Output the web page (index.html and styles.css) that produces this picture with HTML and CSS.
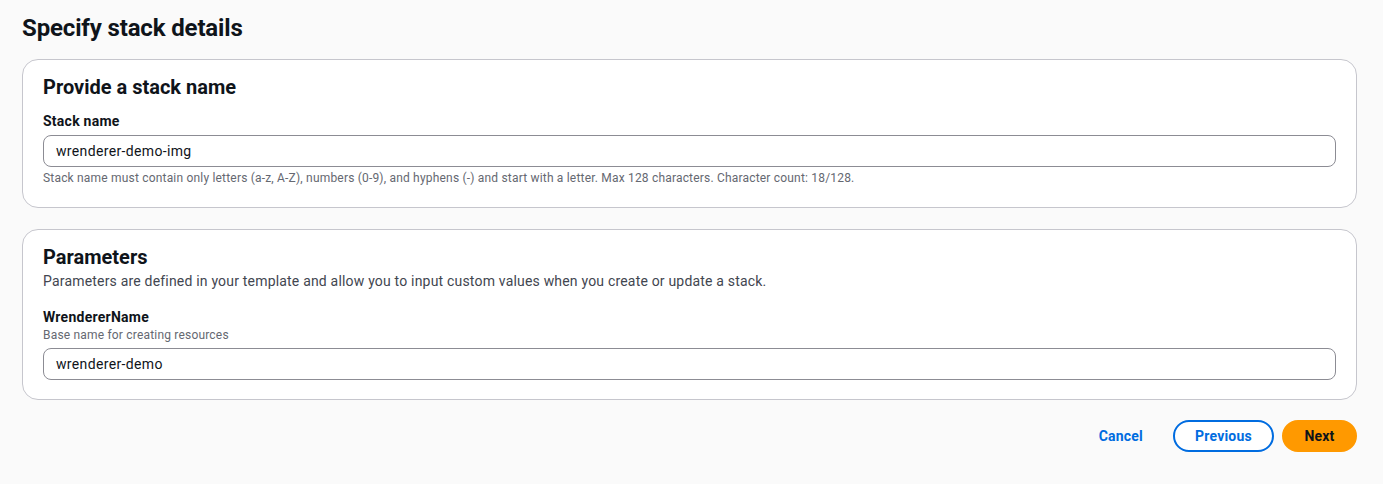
FILE: index.html
```html
<!DOCTYPE html>
<html lang="en">
<head>
<meta charset="utf-8">
<title>Specify stack details</title>
<link rel="stylesheet" href="styles.css">
</head>
<body>
<main class="page">
  <h1 class="page-title">Specify stack details</h1>

  <section class="container">
    <h2 class="container-title">Provide a stack name</h2>
    <div class="field first-field">
      <label class="field-label">Stack name</label>
      <div class="input">wrenderer-demo-img</div>
      <div class="constraint">Stack name must contain only letters (a-z, A-Z), numbers (0-9), and hyphens (-) and start with a letter. Max 128 characters. Character count: 18/128.</div>
    </div>
  </section>

  <section class="container">
    <h2 class="container-title">Parameters</h2>
    <p class="container-desc">Parameters are defined in your template and allow you to input custom values when you create or update a stack.</p>
    <div class="field param-field">
      <label class="field-label">WrendererName</label>
      <div class="field-desc">Base name for creating resources</div>
      <div class="input">wrenderer-demo</div>
    </div>
  </section>

  <div class="actions">
    <button class="btn btn-link">Cancel</button>
    <button class="btn btn-normal">Previous</button>
    <button class="btn btn-primary">Next</button>
  </div>
</main>
</body>
</html>
```

FILE: styles.css
```css
html, body {
  margin: 0;
  padding: 0;
  background: #fafafa;
}

body {
  font-family: Roboto, "Noto Sans", sans-serif;
  color: #0f141a;
}

.page {
  padding: 13px 26px 20px 22px;
}

.page-title {
  margin: 0 0 16px 0;
  font-size: 24px;
  line-height: 30px;
  font-weight: 700;
  letter-spacing: -0.15px;
}

.container {
  background: #ffffff;
  border: 1px solid #c6c6cd;
  border-radius: 16px;
  padding: 15px 20px 19px 20px;
}

.container + .container {
  margin-top: 21px;
}

.container-title {
  margin: 0;
  font-size: 20px;
  line-height: 24px;
  font-weight: 700;
}

.container-desc {
  margin: 2px 0 0 0;
  font-size: 14px;
  line-height: 20px;
  color: #424650;
  letter-spacing: 0.19px;
}

.field {
  display: flex;
  flex-direction: column;
}

.first-field {
  margin-top: 13px;
}

.param-field {
  margin-top: 17px;
}

.field-label {
  font-size: 14px;
  line-height: 18px;
  font-weight: 700;
  letter-spacing: 0.25px;
  margin-bottom: 5px;
}

.param-field .field-label {
  margin-bottom: 1px;
}

.field-desc {
  font-size: 12px;
  line-height: 16px;
  color: #656871;
  letter-spacing: 0.19px;
  margin-bottom: 5px;
}

.input {
  box-sizing: border-box;
  height: 32px;
  border: 1px solid #8c8c94;
  border-radius: 8px;
  padding: 0 12px;
  font-size: 14px;
  line-height: 30px;
  letter-spacing: 0.35px;
  color: #0f141a;
  background: #fff;
}

.constraint {
  margin: 3px 0 2px 0;
  font-size: 12px;
  line-height: 16px;
  letter-spacing: 0.19px;
  color: #656871;
}

.actions {
  display: flex;
  justify-content: flex-end;
  align-items: center;
  gap: 8px;
  margin-top: 20px;
}

.btn {
  box-sizing: border-box;
  height: 32px;
  border-radius: 20px;
  font-family: inherit;
  font-size: 14px;
  font-weight: 700;
  line-height: 18px;
  letter-spacing: 0.2px;
  cursor: pointer;
  padding: 0 20px;
}

.btn-link {
  background: transparent;
  border: 2px solid transparent;
  color: #006ce0;
}

.btn-normal {
  background: #fff;
  border: 2px solid #006ce0;
  color: #006ce0;
  width: 101px;
}

.btn-primary {
  background: #ff9900;
  border: 2px solid #ff9900;
  color: #0f141a;
  width: 75px;
}
```
